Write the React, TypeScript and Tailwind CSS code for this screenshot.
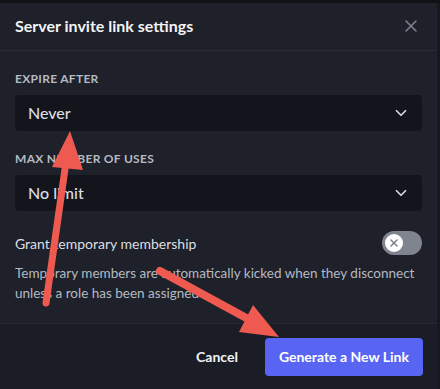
import React from "react";
import { X, ChevronDown } from "lucide-react";

function Select({ value }: { value: string }) {
  return (
    <div className="flex h-[36px] items-center justify-between rounded-[4px] bg-[#14151c] pl-[13px] pr-[12px]">
      <span className="text-[16px] font-medium text-[#dbdee1]">{value}</span>
      <ChevronDown size={18} strokeWidth={2.2} className="text-[#dbdee1]" />
    </div>
  );
}

export default function App() {
  return (
    <div
      className="relative h-[389px] w-[440px] overflow-hidden bg-[#17181d]"
      style={{ fontFamily: "Lato, sans-serif" }}
    >
      <div className="h-[3px] bg-[#111215]" />
      <div className="flex h-[386px] w-[437px] flex-col bg-[#1e202a]">
        <div className="flex h-[48px] items-center justify-between border-b border-[#2a2c36] pl-[15px] pr-[16px] pb-[2px]">
          <h1 className="text-[16px] font-bold text-[#f2f3f5]">Server invite link settings</h1>
          <X size={20} strokeWidth={1.8} className="text-[#80848e]" />
        </div>

        <div className="flex flex-col px-[15px] pt-[20px]">
          <div className="text-[12px] font-bold uppercase leading-[16px] tracking-[0.3px] text-[#b5bac1]">Expire After</div>
          <div className="mt-[8px]">
            <Select value="Never" />
          </div>
          <div className="mt-[20px] text-[12px] font-bold uppercase leading-[16px] tracking-[0.3px] text-[#b5bac1]">Max Number of Uses</div>
          <div className="mt-[8px]">
            <Select value="No limit" />
          </div>
          <div className="mt-[20px] flex items-center justify-between">
            <span className="text-[14px] text-[#dbdee1]">Grant temporary membership</span>
            <div className="flex h-[24px] w-[40px] items-center rounded-full bg-[#80848e] px-[3px]">
              <div className="flex h-[18px] w-[18px] items-center justify-center rounded-full bg-white">
                <X size={12} strokeWidth={3.2} className="text-[#80848e]" />
              </div>
            </div>
          </div>
          <p className="mt-[8px] whitespace-nowrap text-[13.5px] leading-[20px] text-[#b5bac1]">
            Temporary members are automatically kicked when they disconnect
            <br />
            unless a role has been assigned
          </p>
        </div>

        <div className="mt-auto flex h-[66px] items-center justify-end gap-[27px] border-t border-[#262832] bg-[#1b1d26] pr-[14px]">
          <button className="text-[14px] font-bold text-[#f2f3f5]">Cancel</button>
          <button className="h-[38px] rounded-[4px] bg-[#5865f2] px-[14px] text-[14px] font-bold text-white">
            Generate a New Link
          </button>
        </div>
      </div>

      <svg className="pointer-events-none absolute left-0 top-0" width="440" height="389">
        <line x1="46" y1="303" x2="66" y2="162" stroke="#ef5a50" strokeWidth="7" strokeLinecap="round" />
        <polygon points="70,131 52,167 83,170" fill="#ef5a50" />
        <line x1="160" y1="271" x2="250" y2="320" stroke="#ef5a50" strokeWidth="8" strokeLinecap="round" />
        <polygon points="279,337 239,332 253,305" fill="#ef5a50" />
      </svg>
    </div>
  );
}
